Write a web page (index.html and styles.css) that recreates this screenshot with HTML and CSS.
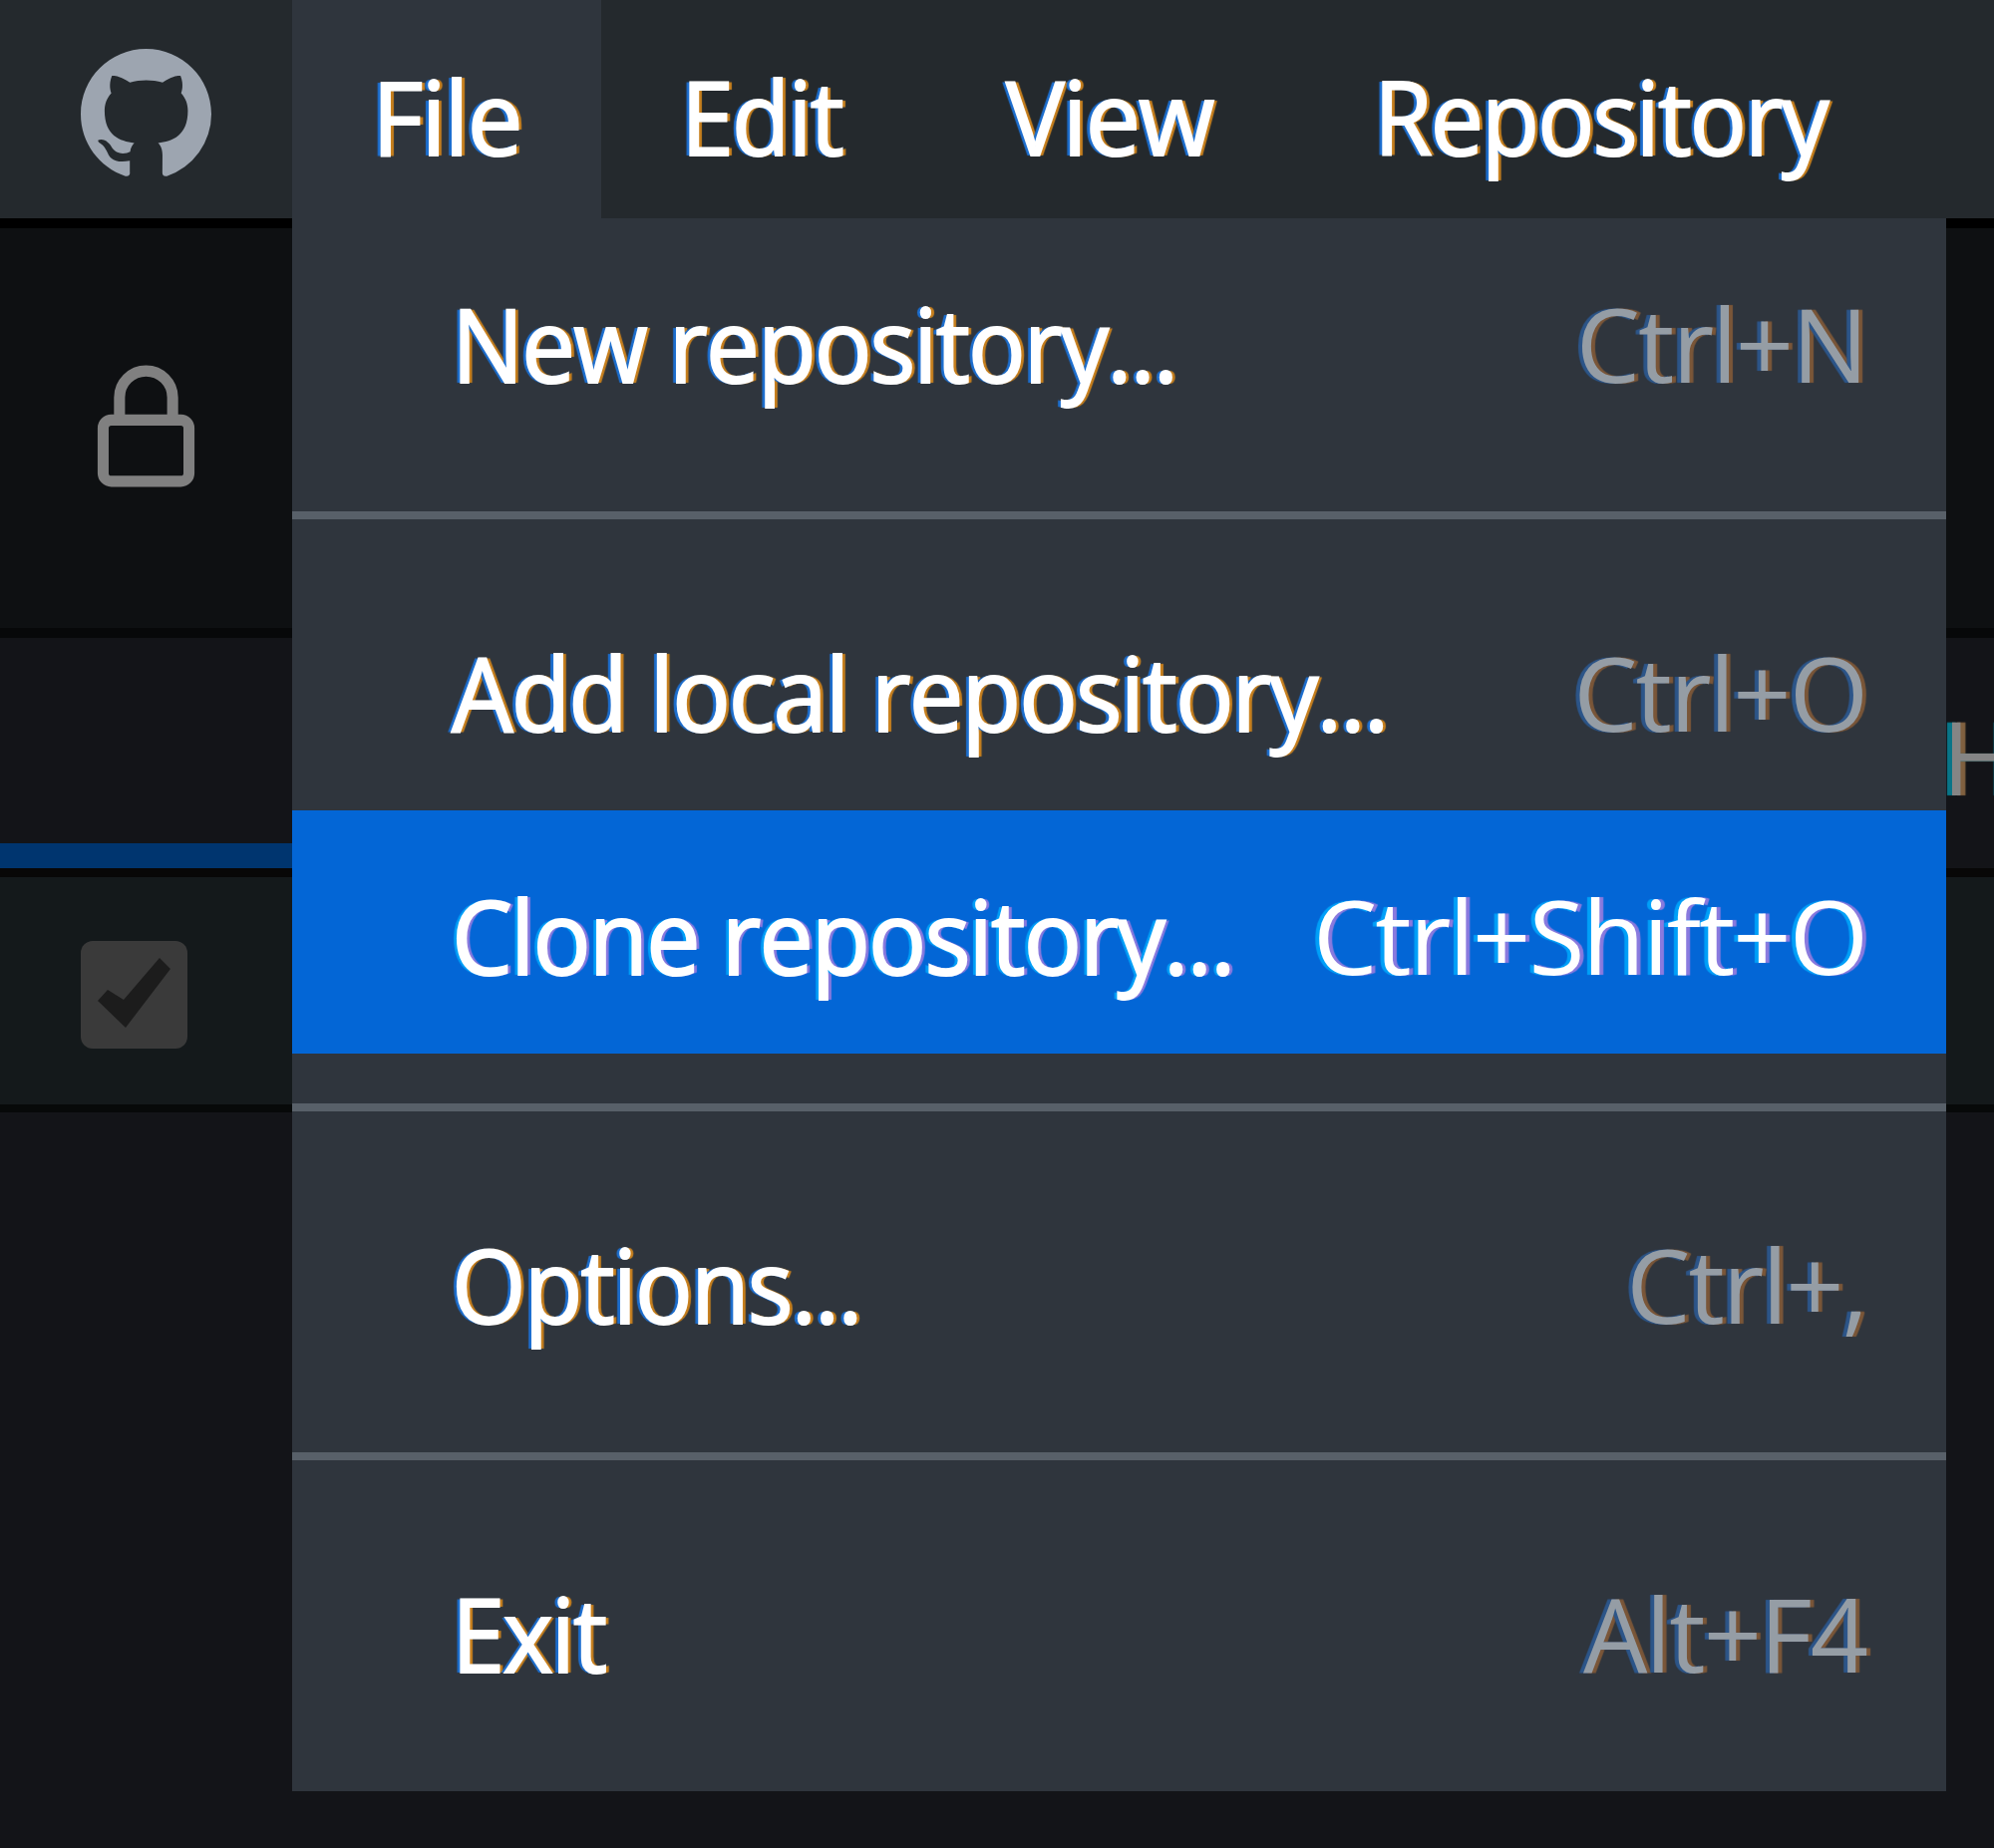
FILE: index.html
```html
<!DOCTYPE html>
<html lang="en">
<head>
<meta charset="utf-8">
<title>GitHub Desktop</title>
<link rel="stylesheet" href="styles.css">
</head>
<body>
<div class="app">
  <header class="titlebar">
    <div class="brand">
      <svg class="mark" viewBox="0 0 16 16" aria-hidden="true"><path fill="currentColor" fill-rule="evenodd" d="M8 0C3.58 0 0 3.58 0 8c0 3.54 2.29 6.53 5.47 7.59.4.07.55-.17.55-.38 0-.19-.01-.82-.01-1.49-2.01.37-2.53-.49-2.69-.94-.09-.23-.48-.94-.82-1.13-.28-.15-.68-.52-.01-.53.63-.01 1.08.58 1.23.82.72 1.21 1.87.87 2.33.66.07-.52.28-.87.51-1.07-1.78-.2-3.64-.89-3.64-3.95 0-.87.31-1.59.82-2.15-.08-.2-.36-1.02.08-2.12 0 0 .67-.21 2.2.82.64-.18 1.32-.27 2-.27.68 0 1.36.09 2 .27 1.53-1.04 2.2-.82 2.2-.82.44 1.1.16 1.92.08 2.12.51.56.82 1.27.82 2.15 0 3.07-1.87 3.75-3.65 3.95.29.25.54.73.54 1.48 0 1.07-.01 1.93-.01 2.2 0 .21.15.46.55.38A8.013 8.013 0 0016 8c0-4.42-3.58-8-8-8z"/></svg>
    </div>
    <nav class="menubar">
      <div class="top file open"><span class="label">File</span>
        <div class="menu">
          <div class="item"><span class="label new">New repository...</span><span class="keys">Ctrl+N</span></div>
          <hr>
          <div class="item"><span class="label add">Add local repository...</span><span class="keys">Ctrl+O</span></div>
          <div class="item selected"><span class="label clone">Clone repository...</span><span class="keys">Ctrl+Shift+O</span></div>
          <hr>
          <div class="item"><span class="label options">Options...</span><span class="keys">Ctrl+,</span></div>
          <hr>
          <div class="item"><span class="label exit">Exit</span><span class="keys">Alt+F4</span></div>
        </div>
      </div>
      <div class="top edit"><span class="label">Edit</span></div>
      <div class="top view"><span class="label">View</span></div>
      <div class="top repo"><span class="label">Repository</span></div>
    </nav>
  </header>
  <div class="toolbar">
    <svg class="lock" viewBox="0 0 12 15" aria-hidden="true"><g fill="none" stroke="currentColor" stroke-width="1.35"><rect x=".75" y="6.75" width="10.5" height="7.5" rx="1"/><path d="M2.75 6.5V4a3.25 3.25 0 0 1 6.5 0v2.5"/></g></svg>
  </div>
  <div class="tabs">
    <div class="tab current"></div>
    <div class="tab"><span class="tabname">H</span></div>
  </div>
  <div class="filter">
    <svg class="check" viewBox="0 0 107 108" aria-hidden="true"><rect width="107" height="108" rx="12" fill="#3a3a3a"/><path fill="#1c1c1c" d="M17 60 27 49 43 59 79 17 90 28 45 87z"/></svg>
  </div>
  <div class="changes"></div>
</div>
</body>
</html>
```
FILE: styles.css
```css
* { box-sizing: border-box; }
body {
  margin: 0;
  background: #131418;
  font-family: "Open Sans", "Noto Sans", sans-serif;
  font-size: 102px;
  letter-spacing: -2px;
  color: #fff;
}
.app { width: 2000px; height: 1854px; display: flex; flex-direction: column; overflow: hidden; }
.titlebar { height: 219px; flex: none; display: flex; background: #24292d; }
.brand { width: 293px; padding: 49px 0 0 81px; color: #9da5b0; }
.mark { display: block; width: 131px; height: 131px; }
.menubar { display: flex; }
.top { position: relative; height: 219px; line-height: 219px; padding: 7px 0 0 80px; white-space: nowrap; }
.file { width: 310px; }
.edit { width: 322px; }
.view { width: 373px; padding-left: 84px; }
.open { background: #2f353d; }
.label, .keys { display: block; font-weight: 400; }
.label {
  -webkit-text-stroke: 2px #fff;
  transform: scaleX(.94);
  transform-origin: 0 50%;
  text-shadow: -4px 0 1px #1d6fd0, 4px 0 1px #c8801e;
}
.file > .label { transform: scaleX(.975); }
.edit > .label { transform: scaleX(.935); }
.view > .label { transform: scaleX(.965); }
.repo > .label { transform: scaleX(.93); }
.menu .add { transform: scaleX(.955); }
.menu .clone { transform: scaleX(.948); }
.menu {
  position: absolute;
  z-index: 2;
  left: 0;
  top: 219px;
  width: 1659px;
  height: 1578px;
  background: #2f353d;
}
.item {
  height: 244px;
  line-height: 244px;
  padding: 4px 80px 0 160px;
  display: flex;
  justify-content: space-between;
}
.keys { color: #959da5; text-shadow: -4px 0 1px #2c5589, 4px 0 1px #7a5638; }
.selected { background: #0366d6; }
.selected .label, .selected .keys { color: #fff; text-shadow: -4px 0 1px #00a0f8, 4px 0 1px #8a7ade; }
.menu hr { height: 8px; border: 0; margin: 50px 0 48px; background: #586069; }
.toolbar {
  height: 411px;
  flex: none;
  border-top: 10px solid #000;
  background: #0e1012;
  padding: 137px 0 0 97px;
  color: #808080;
}
.lock { display: block; width: 99px; height: 123px; }
.tabs {
  height: 250px;
  flex: none;
  display: flex;
  border-top: 10px solid #070809;
  border-bottom: 9px solid #080707;
  background: #131418;
}
.current { width: 1948px; flex: none; border-bottom: 25px solid #00356f; }
.tab:last-child { width: 52px; overflow: hidden; line-height: 231px; padding-top: 3px; }
.tabname { color: #858585; text-shadow: -5px 0 1px #087588, 5px 0 1px #80603f; }
.filter {
  height: 236px;
  flex: none;
  border-bottom: 8px solid #070909;
  background: #14191b;
  padding: 64px 0 0 81px;
}
.check { display: block; width: 107px; height: 108px; }
.changes { flex: 1; background: #131418; }
```
